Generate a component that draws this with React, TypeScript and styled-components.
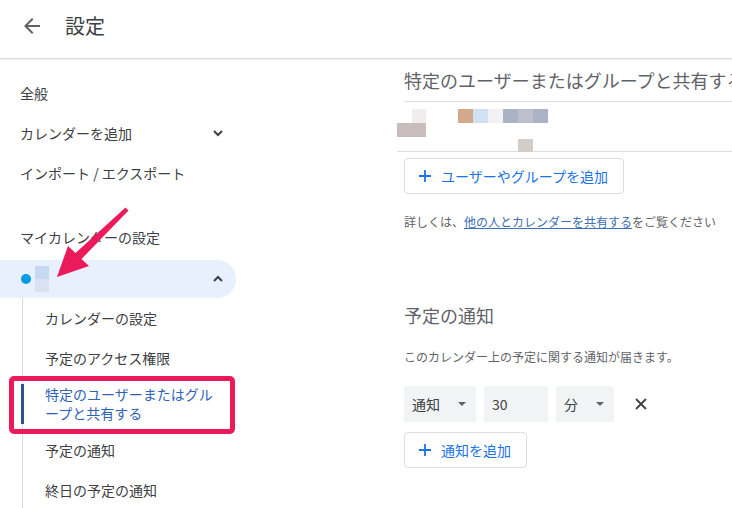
import styled, { createGlobalStyle } from 'styled-components';

const GlobalStyle = createGlobalStyle`
  html, body { margin: 0; padding: 0; background: #fff; }
  body { font-family: "Noto Sans CJK JP", "Noto Sans", sans-serif; color: #3c4043; }
`;

const Page = styled.div`
  position: relative;
  width: 732px;
  height: 508px;
  overflow: hidden;
  display: flex;
  flex-direction: column;
`;

const Header = styled.header`
  height: 59px;
  box-sizing: border-box;
  flex-shrink: 0;
  display: flex;
  align-items: center;
  padding: 0 0 7px 20px;
  border-bottom: 1px solid #dadce0;
  box-shadow: 0 1px 1px rgba(60, 64, 67, 0.08);
`;

const HeaderTitle = styled.h1`
  margin: 0 0 0 21px;
  font-size: 20px;
  font-weight: 400;
  line-height: 28px;
  color: #3c4043;
`;

const Body = styled.div`
  flex: 1;
  display: flex;
  min-height: 0;
`;

const Sidebar = styled.nav`
  width: 250px;
  flex-shrink: 0;
  padding-top: 14px;
`;

const NavItem = styled.div<{ $gapTop?: number }>`
  height: 40px;
  width: 236px;
  box-sizing: border-box;
  display: flex;
  align-items: center;
  justify-content: space-between;
  padding: 0 10px 0 20px;
  margin-top: ${(p) => p.$gapTop ?? 0}px;
  font-size: 14px;
  color: #3c4043;
  white-space: nowrap;
`;

const CalendarRow = styled.div`
  height: 38px;
  width: 236px;
  margin-top: 3px;
  box-sizing: border-box;
  display: flex;
  align-items: center;
  justify-content: space-between;
  padding: 0 10px 0 21px;
  background: #e8f0fe;
  border-radius: 0 19px 19px 0;
`;

const Dot = styled.span`
  width: 10px;
  height: 10px;
  border-radius: 50%;
  background: #039be5;
  display: inline-block;
`;

const NameBlur = styled.div`
  display: flex;
  align-items: center;
  gap: 4px;
`;

const SubList = styled.div`
  margin-left: 22px;
  border-left: 1px solid #dadce0;
`;

const SubItem = styled.div<{ $active?: boolean; $tall?: boolean }>`
  position: relative;
  height: ${(p) => (p.$tall ? 52 : 40)}px;
  display: flex;
  align-items: center;
  padding-left: 22px;
  padding-right: 20px;
  font-size: 14px;
  line-height: 19px;
  color: ${(p) => (p.$active ? '#2f63b9' : '#3c4043')};

  ${(p) =>
    p.$active &&
    `
    &::before {
      content: '';
      position: absolute;
      left: -2px;
      top: 6px;
      bottom: 6px;
      width: 3px;
      background: #2c5592;
    }
    &::after {
      content: '';
      position: absolute;
      left: -14px;
      top: -2px;
      width: 216px;
      height: 48px;
      border: 5px solid #ec1a5b;
      border-radius: 5px;
    }
  `}
`;

const Main = styled.main`
  flex: 1;
  min-width: 0;
  padding-left: 154px;
  overflow: hidden;
`;

const SectionTitle = styled.h2<{ $gapTop?: number }>`
  margin: ${(p) => p.$gapTop ?? 0}px 0 0;
  font-size: 18px;
  font-weight: 400;
  line-height: 24px;
  color: #5f6368;
  white-space: nowrap;
`;

const TitleBar = styled.div`
  height: 42px;
  display: flex;
  align-items: center;
  border-bottom: 1px solid #dadce0;
`;

const UserRow = styled.div`
  height: 50px;
  border-bottom: 1px solid #dadce0;
  margin-left: -7px;
  display: flex;
  align-items: flex-start;
  padding-top: 6px;
  box-sizing: border-box;
`;

const OutlineButton = styled.button<{ $gapTop: number }>`
  margin-top: ${(p) => p.$gapTop}px;
  height: 36px;
  display: inline-flex;
  align-items: center;
  gap: 8px;
  padding: 0 15px 0 12px;
  border: 1px solid #dadce0;
  border-radius: 4px;
  background: #fff;
  color: #1a73e8;
  font-family: inherit;
  font-size: 14px;
  cursor: pointer;
`;

const Note = styled.p<{ $gapTop: number }>`
  margin: ${(p) => p.$gapTop}px 0 0;
  font-size: 12px;
  line-height: 18px;
  color: #5f6368;
  white-space: nowrap;
`;

const Link = styled.a`
  color: #3b6fb6;
  text-decoration: underline;
`;

const Controls = styled.div`
  margin-top: 20px;
  display: flex;
  align-items: center;
  gap: 8px;
`;

const Field = styled.div<{ $w: number }>`
  width: ${(p) => p.$w}px;
  height: 36px;
  box-sizing: border-box;
  display: flex;
  align-items: center;
  justify-content: space-between;
  padding: 0 10px 0 8px;
  background: #f1f3f4;
  border-radius: 4px 4px 0 0;
  font-size: 14px;
  color: #3c4043;
`;

const Caret = styled.span`
  width: 0;
  height: 0;
  border-left: 4px solid transparent;
  border-right: 4px solid transparent;
  border-top: 4px solid #5f6368;
`;

const CloseBtn = styled.span`
  margin-left: 12px;
  display: flex;
  align-items: center;
`;

const Overlay = styled.svg`
  position: absolute;
  left: 0;
  top: 0;
  pointer-events: none;
`;

const BackIcon = () => (
  <svg width="24" height="24" viewBox="0 0 24 24">
    <path fill="#5f6368" d="M20 11H7.83l5.59-5.59L12 4l-8 8 8 8 1.41-1.41L7.83 13H20v-2z" />
  </svg>
);

const Chevron = ({ up }: { up?: boolean }) => (
  <svg width="16" height="16" viewBox="0 0 16 16">
    <path
      d={up ? 'M4 10l4-4 4 4' : 'M4 6l4 4 4-4'}
      fill="none"
      stroke="#3c4043"
      strokeWidth="2"
    />
  </svg>
);

const Plus = () => (
  <svg width="16" height="16" viewBox="0 0 16 16">
    <path d="M8 2v12M2 8h12" stroke="#1a73e8" strokeWidth="1.8" />
  </svg>
);

const Cross = () => (
  <svg width="14" height="14" viewBox="0 0 14 14">
    <path d="M2 2l10 10M12 2L2 12" stroke="#3c4043" strokeWidth="1.8" />
  </svg>
);

// mosaic of the hidden user entry
const mosaic: [number, number, number, number, string][] = [
  [15, 1, 14, 14, '#f1eded'],
  [0, 15, 29, 14, '#c9bcbc'],
  [61, 1, 15, 14, '#d3a98c'],
  [76, 1, 15, 14, '#cfe1f2'],
  [91, 1, 15, 14, '#f2f2f5'],
  [106, 1, 15, 14, '#aab3c4'],
  [121, 1, 15, 14, '#bdc0cc'],
  [136, 1, 15, 14, '#aab4c6'],
  [121, 31, 15, 13, '#d2cdc9'],
];

const UserMosaic = () => (
  <svg width="160" height="46" viewBox="0 0 160 46">
    {mosaic.map(([x, y, w, h, c], i) => (
      <rect key={i} x={x} y={y} width={w} height={h} fill={c} />
    ))}
  </svg>
);

const NameMosaic = () => (
  <svg width="14" height="26" viewBox="0 0 14 26">
    <rect x="0" y="0" width="14" height="13" fill="#c6d8f2" />
    <rect x="0" y="13" width="14" height="13" fill="#dbe1f2" />
  </svg>
);

export default function App() {
  return (
    <Page>
      <GlobalStyle />
      <Header>
        <BackIcon />
        <HeaderTitle>設定</HeaderTitle>
      </Header>
      <Body>
        <Sidebar>
          <NavItem>全般</NavItem>
          <NavItem>
            カレンダーを追加
            <Chevron />
          </NavItem>
          <NavItem>インポート / エクスポート</NavItem>
          <NavItem $gapTop={24}>マイカレンダーの設定</NavItem>
          <CalendarRow>
            <NameBlur>
              <Dot />
              <NameMosaic />
            </NameBlur>
            <Chevron up />
          </CalendarRow>
          <SubList>
            <SubItem>カレンダーの設定</SubItem>
            <SubItem>予定のアクセス権限</SubItem>
            <SubItem $active $tall>
              特定のユーザーまたはグル
              <br />
              ープと共有する
            </SubItem>
            <SubItem>予定の通知</SubItem>
            <SubItem>終日の予定の通知</SubItem>
          </SubList>
        </Sidebar>
        <Main>
          <TitleBar>
            <SectionTitle>特定のユーザーまたはグループと共有する</SectionTitle>
          </TitleBar>
          <UserRow>
            <UserMosaic />
          </UserRow>
          <OutlineButton $gapTop={6}>
            <Plus />
            ユーザーやグループを追加
          </OutlineButton>
          <Note $gapTop={19}>
            詳しくは、<Link href="#">他の人とカレンダーを共有する</Link>をご覧ください
          </Note>
          <SectionTitle $gapTop={72}>予定の通知</SectionTitle>
          <Note $gapTop={21}>このカレンダー上の予定に関する通知が届きます。</Note>
          <Controls>
            <Field $w={72}>
              通知
              <Caret />
            </Field>
            <Field $w={64}>30</Field>
            <Field $w={58}>
              分
              <Caret />
            </Field>
            <CloseBtn>
              <Cross />
            </CloseBtn>
          </Controls>
          <OutlineButton $gapTop={10}>
            <Plus />
            通知を追加
          </OutlineButton>
        </Main>
      </Body>
      <Overlay width="732" height="508" viewBox="0 0 732 508">
        <polygon
          fill="#ec1a5b"
          points="57,277 68,246 75.5,253 125.5,207.5 128.5,210.5 81.5,259 89,266"
        />
      </Overlay>
    </Page>
  );
}
